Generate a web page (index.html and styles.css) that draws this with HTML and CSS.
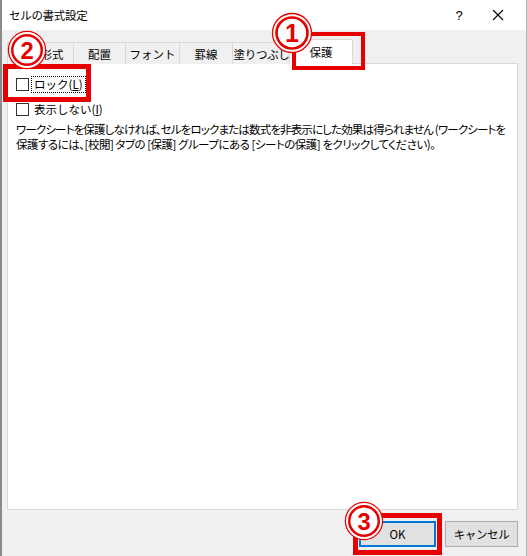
FILE: index.html
```html
<!DOCTYPE html>
<html lang="ja">
<head>
<meta charset="utf-8">
<link rel="stylesheet" href="styles.css">
</head>
<body>
<div class="window">
  <div class="titlebar">
    <span class="title">セルの書式設定</span>
    <span class="help">?</span>
    <span class="close"><svg width="12" height="12" viewBox="0 0 12 12"><path d="M1 1L11 11M11 1L1 11" stroke="#000" stroke-width="1.1" fill="none"/></svg></span>
  </div>
  <div class="body">
    <div class="tabs">
      <div class="tab t1">表示形式</div>
      <div class="tab t2">配置</div>
      <div class="tab t3">フォント</div>
      <div class="tab t4">罫線</div>
      <div class="tab t5">塗りつぶし</div>
      <div class="tab active">保護</div>
    </div>
    <div class="panel">
      <div class="check-row first">
        <span class="box"></span>
        <span class="label focus">ロック(<u>L</u>)</span>
      </div>
      <div class="check-row second">
        <span class="box"></span>
        <span class="label">表示しない(<u>I</u>)</span>
      </div>
      <p class="note"><span class="line l1">ワークシートを保護しなければ、セルをロックまたは数式を非表示にした効果は得られません&nbsp;(ワークシートを</span><span class="line l2">保護するには、[校閲]&nbsp;タブの&nbsp;[保護]&nbsp;グループにある&nbsp;[シートの保護]&nbsp;をクリックしてください)。</span></p>
    </div>
    <div class="footer">
      <button class="btn ok">OK</button>
      <button class="btn cancel">キャンセル</button>
    </div>
  </div>

  <div class="redbox rb1"></div>
  <div class="redbox rb2"></div>
  <div class="redbox rb3"></div>

  <svg class="badge b1" width="42" height="42" viewBox="0 0 42 42"><circle cx="21" cy="21" r="19.5" fill="#fff" stroke="#e60000" stroke-width="1.3"/><circle cx="21" cy="21" r="15.5" fill="#fff" stroke="#e60000" stroke-width="2.6"/><text x="21" y="30" text-anchor="middle" class="num">1</text></svg>
  <svg class="badge b2" width="40" height="40" viewBox="0 0 42 42"><circle cx="21" cy="21" r="19.5" fill="#fff" stroke="#e60000" stroke-width="1.3"/><circle cx="21" cy="21" r="15.5" fill="#fff" stroke="#e60000" stroke-width="2.6"/><text x="21" y="30" text-anchor="middle" class="num">2</text></svg>
  <svg class="badge b3" width="40" height="40" viewBox="0 0 42 42"><circle cx="21" cy="21" r="19.5" fill="#fff" stroke="#e60000" stroke-width="1.3"/><circle cx="21" cy="21" r="15.5" fill="#fff" stroke="#e60000" stroke-width="2.6"/><text x="21" y="30" text-anchor="middle" class="num">3</text></svg>
</div>
</body>
</html>
```

FILE: styles.css
```css
* { box-sizing: border-box; }
html, body { margin: 0; padding: 0; }
body {
  width: 527px;
  height: 556px;
  overflow: hidden;
  font-family: "Noto Sans CJK JP", "Noto Sans", sans-serif;
  color: #000;
  background: #f0f0f0;
}
.window {
  position: relative;
  width: 527px;
  height: 556px;
  background: #f0f0f0;
  border-left: 2px solid #8a8a8a;
  border-right: 1px solid #b5b5b5;
}
.titlebar {
  height: 30px;
  background: #fff;
  display: flex;
  align-items: center;
  padding-left: 7px;
}
.title {
  font-size: 11.5px;
  letter-spacing: -0.3px;
  flex: 1;
}
.help {
  font-family: "Liberation Sans", sans-serif;
  font-size: 13px;
  width: 20px;
  text-align: center;
  margin-right: 23px;
}
.close {
  width: 12px;
  height: 12px;
  display: flex;
  margin-right: 22px;
}
.body {
  padding: 0 8px 0 5px;
}
.tabs {
  display: flex;
  align-items: flex-end;
  height: 33px;
  position: relative;
  z-index: 1;
}
.tab {
  height: 22px;
  margin-bottom: -1px;
  border: 1px solid #d9d9d9;
  border-bottom: none;
  margin-left: -1px;
  background: #f0f0f0;
  font-size: 11.5px;
  display: flex;
  align-items: center;
  justify-content: center;
  padding-top: 1px;
  white-space: nowrap;
}
.t1 { width: 67px; margin-left: 0; }
.t2 { width: 53px; }
.t3 { width: 55px; }
.t4 { width: 54px; }
.t5 { width: 59px; letter-spacing: -0.3px; }
.tab.active {
  width: 64px;
  height: 25px;
  background: #fff;
  margin-left: -2px;
  padding-top: 0;
}
.panel {
  height: 447px;
  background: #fff;
  border: 1px solid #d9d9d9;
  padding: 11px 8px 0 8px;
}
.check-row {
  display: flex;
  align-items: center;
  height: 19px;
  font-size: 11.5px;
}
.check-row.second { margin-top: 6px; }
.box {
  width: 13px;
  height: 13px;
  border: 1px solid #333;
  background: #fff;
  margin-right: 2px;
}
.label {
  padding: 0 2px;
  border: 1px dotted transparent;
  line-height: 15px;
}
.label.focus { border-color: #000; }
.label u { text-decoration-thickness: 1px; text-underline-offset: 1px; }
.note {
  margin: 3px 0 0 0;
  font-size: 11.5px;
  line-height: 15px;
}
.line {
  display: block;
  white-space: nowrap;
  font-feature-settings: "palt";
}
.l1 { letter-spacing: -0.85px; }
.l2 { letter-spacing: -0.5px; }
.footer {
  display: flex;
  justify-content: flex-end;
  gap: 9px;
  padding-top: 11px;
}
.btn {
  height: 26px;
  background: #e1e1e1;
  border: 1px solid #adadad;
  font-family: "Noto Sans CJK JP", "Noto Sans", sans-serif;
  font-size: 11.5px;
  color: #000;
  padding: 0;
  margin: 0;
}
.btn.ok {
  width: 77px;
  border: 2px solid #0078d7;
}
.btn.cancel {
  width: 73px;
  letter-spacing: -0.4px;
}
.redbox {
  position: absolute;
  border: 4px solid #e60000;
  z-index: 5;
}
.rb1 { left: 290px; top: 32px; width: 73px; height: 38px; }
.rb2 { left: 1px; top: 64px; width: 88px; height: 38px; border-width: 5px; }
.rb3 { left: 351px; top: 513px; width: 89px; height: 42px; border-width: 5px; }
.badge {
  position: absolute;
  z-index: 6;
}
.b1 { left: 269px; top: 12px; }
.b2 { left: 5px; top: 30px; }
.b3 { left: 342px; top: 501px; }
.num {
  font-family: "Liberation Sans", "DejaVu Sans", sans-serif;
  font-weight: bold;
  font-size: 25px;
  fill: #e60000;
  stroke: #fff;
  stroke-width: 2px;
  paint-order: stroke;
}
```
